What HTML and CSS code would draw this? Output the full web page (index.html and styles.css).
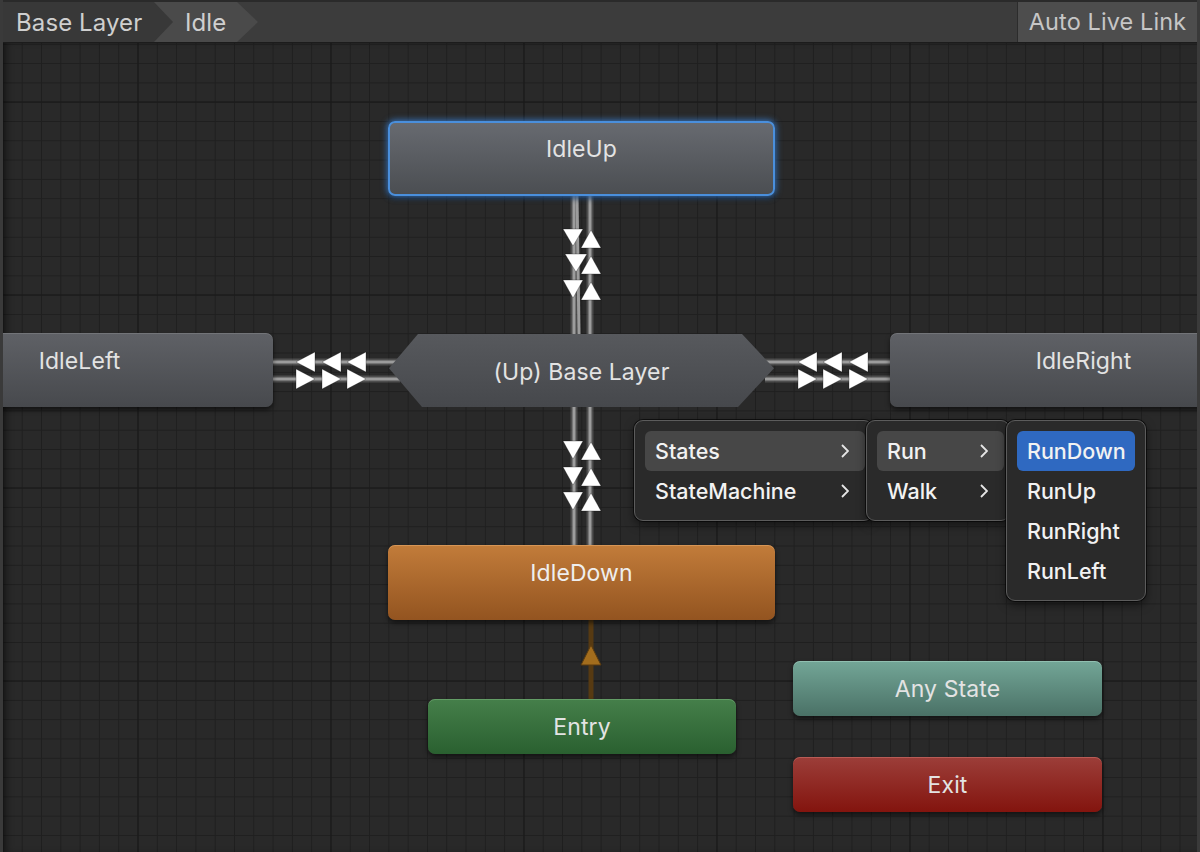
FILE: index.html
```html
<!DOCTYPE html>
<html lang="en">
<head>
<meta charset="utf-8">
<title>Animator - Base Layer</title>
<link rel="stylesheet" href="styles.css">
</head>
<body>
<div class="app">
  <header class="toolbar">
    <nav class="crumbs">
      <span class="crumb crumb-root">Base Layer</span>
      <span class="crumb crumb-current">Idle</span>
    </nav>
    <div class="toolbar-fill"></div>
    <button class="live-link">Auto Live Link</button>
  </header>

  <main class="graph">
    <svg class="edges" viewBox="0 43 1200 809" width="1200" height="809" aria-hidden="true">
      <g class="edge-glow">
        <line x1="574" y1="196" x2="574" y2="334"/>
        <line x1="590" y1="196" x2="590" y2="334"/>
        <line x1="574" y1="407" x2="574" y2="545"/>
        <line x1="590" y1="407" x2="590" y2="545"/>
        <line x1="270" y1="362" x2="400" y2="362"/>
        <line x1="270" y1="379" x2="400" y2="379"/>
        <line x1="765" y1="362" x2="892" y2="362"/>
        <line x1="765" y1="379" x2="892" y2="379"/>
      </g>
      <g class="edge-core">
        <line x1="574" y1="196" x2="574" y2="334"/>
        <line x1="577" y1="196" x2="579" y2="334"/>
        <line x1="590" y1="196" x2="590" y2="334"/>
        <line x1="574" y1="407" x2="574" y2="545"/>
        <line x1="590" y1="407" x2="590" y2="545"/>
        <line x1="270" y1="362" x2="400" y2="362"/>
        <line x1="270" y1="379" x2="400" y2="379"/>
        <line x1="765" y1="362" x2="892" y2="362"/>
        <line x1="765" y1="379" x2="892" y2="379"/>
      </g>
      <g class="arrows">
        <polygon points="563,229 583,229 573,246"/>
        <polygon points="565,254 587,254 576,272"/>
        <polygon points="563,280 583,280 573,298"/>
        <polygon points="581,248 601,248 591,230"/>
        <polygon points="581,274 601,274 591,256"/>
        <polygon points="581,300 601,300 591,282"/>
        <polygon points="563,441 583,441 573,459"/>
        <polygon points="563,467 583,467 573,485"/>
        <polygon points="563,492 583,492 573,510"/>
        <polygon points="581,460 601,460 591,442"/>
        <polygon points="581,486 601,486 591,468"/>
        <polygon points="581,511 601,511 591,493"/>
        <polygon points="296,362 315,352 315,372"/>
        <polygon points="322,362 341,352 341,372"/>
        <polygon points="347,362 366,352 366,372"/>
        <polygon points="315,379 296,369 296,389"/>
        <polygon points="341,379 322,369 322,389"/>
        <polygon points="366,379 347,369 347,389"/>
        <polygon points="798,362 817,352 817,372"/>
        <polygon points="823,362 842,352 842,372"/>
        <polygon points="849,362 868,352 868,372"/>
        <polygon points="817,379 798,369 798,389"/>
        <polygon points="842,379 823,369 823,389"/>
        <polygon points="868,379 849,369 849,389"/>
      </g>
      <line class="entry-edge" x1="591" y1="620" x2="591" y2="699"/>
      <polygon class="entry-arrow" points="581,665 601,665 591,645"/>
    </svg>

    <div class="node state n-idleup selected">IdleUp</div>
    <div class="node state n-idleleft">IdleLeft</div>
    <div class="node state n-idleright">IdleRight</div>
    <div class="node machine n-base">(Up) Base Layer</div>
    <div class="node state default n-idledown">IdleDown</div>
    <div class="node special entry n-entry">Entry</div>
    <div class="node special any n-any">Any State</div>
    <div class="node special exit n-exit">Exit</div>

    <div class="menus">
      <ul class="menu menu-1">
        <li class="item open"><span>States</span><svg class="chev" viewBox="0 0 8 14"><polyline points="1,1 7,7 1,13"/></svg></li>
        <li class="item"><span>StateMachine</span><svg class="chev" viewBox="0 0 8 14"><polyline points="1,1 7,7 1,13"/></svg></li>
      </ul>
      <ul class="menu menu-2">
        <li class="item open"><span>Run</span><svg class="chev" viewBox="0 0 8 14"><polyline points="1,1 7,7 1,13"/></svg></li>
        <li class="item"><span>Walk</span><svg class="chev" viewBox="0 0 8 14"><polyline points="1,1 7,7 1,13"/></svg></li>
      </ul>
      <ul class="menu menu-3">
        <li class="item active"><span>RunDown</span></li>
        <li class="item"><span>RunUp</span></li>
        <li class="item"><span>RunRight</span></li>
        <li class="item"><span>RunLeft</span></li>
      </ul>
    </div>
  </main>
</div>
</body>
</html>
```

FILE: styles.css
```css
* { box-sizing: border-box; }

html, body {
  margin: 0;
  padding: 0;
  width: 1200px;
  height: 852px;
  overflow: hidden;
  background: #282828;
}

.app {
  width: 1200px;
  height: 852px;
  display: flex;
  flex-direction: column;
  font-family: Inter, "Noto Sans", "Liberation Sans", sans-serif;
  border-left: 3px solid #3a3a3a;
  border-right: 3px solid #3a3a3a;
}

/* ---------- toolbar ---------- */
.toolbar {
  height: 43px;
  flex: 0 0 43px;
  display: flex;
  align-items: stretch;
  background: #3c3c3c;
  border-top: 2px solid #2a2a2a;
  border-bottom: 1px solid #1c1c1c;
}

.crumbs {
  display: flex;
  align-items: stretch;
}

.crumb {
  display: flex;
  align-items: center;
  font-size: 24px;
  color: #cfcfcf;
  letter-spacing: 0.1px;
}

.crumb-root {
  position: relative;
  z-index: 2;
  padding: 0 20px 0 13px;
  width: 170px;
  background: #383838;
  clip-path: polygon(0 0, 151px 0, 170px 50%, 151px 100%, 0 100%);
}

.crumb-current {
  margin-left: -19px;
  width: 104px;
  padding-left: 31px;
  background: #4a4a4a;
  clip-path: polygon(0 0, 83px 0, 104px 50%, 83px 100%, 0 100%);
}

.toolbar-fill { flex: 1; }

.live-link {
  margin: 0;
  border: 0;
  border-left: 1px solid #2c2c2c;
  width: 180px;
  background: #4d4d4d;
  color: #c6c6c6;
  font-family: inherit;
  font-size: 23.5px;
  padding: 0 0 2px;
  letter-spacing: 0.1px;
}

/* ---------- graph ---------- */
.graph {
  position: relative;
  flex: 1;
  overflow: hidden;
  background-color: #292929;
  background-image:
    linear-gradient(to right, #181818 0, #181818 1.5px, transparent 1.5px),
    linear-gradient(to bottom, #181818 0, #181818 1.5px, transparent 1.5px),
    linear-gradient(to right, #1f1f1f 0, #1f1f1f 1px, transparent 1px),
    linear-gradient(to bottom, #1f1f1f 0, #1f1f1f 1px, transparent 1px);
  background-size: 193px 193px, 193px 193px, 19.3px 19.3px, 19.3px 19.3px;
  background-position: 134.5px 0, 0 58.5px, 134.5px 0, 0 58.7px;
  box-shadow: inset 6px 0 8px -4px rgba(0,0,0,0.6);
}

.edges {
  position: absolute;
  left: -3px;
  top: 0;
}

.edge-glow line {
  stroke: rgba(150,150,150,0.35);
  stroke-width: 7;
}

.edge-core line {
  stroke: #9c9c9c;
  stroke-width: 3;
}

.arrows polygon {
  fill: #ffffff;
  stroke: rgba(0,0,0,0.35);
  stroke-width: 0.8;
}

.entry-edge {
  stroke: #573a12;
  stroke-width: 5;
}

.entry-arrow {
  fill: #a36d1d;
  stroke: #5a3b10;
  stroke-width: 1;
}

/* ---------- nodes ---------- */
.node {
  position: absolute;
  font-size: 23px;
  line-height: 24px;
  color: #e3e3e3;
  text-align: center;
  letter-spacing: 0.1px;
}

.state {
  width: 387px;
  height: 75px;
  padding-top: 16px;
  border-radius: 7px;
  background: linear-gradient(#5f6166, #47494d);
  box-shadow: inset 0 1px 0 rgba(255,255,255,0.12), 0 3px 5px rgba(0,0,0,0.55);
}

.state.selected {
  border: 2px solid #4a8fdc;
  padding-top: 14px;
  background: linear-gradient(#676a70, #4b4e52);
  box-shadow: 0 0 6px 1px rgba(60,130,214,0.85), 0 3px 5px rgba(0,0,0,0.5);
}

.state.default {
  background: linear-gradient(#c27c3a, #935420);
  color: #eeeeee;
  box-shadow: inset 0 1px 0 rgba(255,200,140,0.35), 0 3px 5px rgba(0,0,0,0.55);
}

.machine {
  width: 385px;
  height: 73px;
  padding-top: 26px;
  background: linear-gradient(#57595d, #46484c);
  clip-path: polygon(29px 0, calc(100% - 32px) 0, 100% 47%, calc(100% - 36px) 100%, 33px 100%, 0 47%);
}

.special {
  width: 309px;
  height: 55px;
  padding-top: 16px;
  border-radius: 7px;
}

.entry {
  width: 308px;
  background: linear-gradient(#457f4a, #2a6030);
  box-shadow: inset 0 1px 0 rgba(170,230,170,0.3), 0 3px 5px rgba(0,0,0,0.55);
}
.any {
  background: linear-gradient(#73a697, #4a7166);
  box-shadow: inset 0 1px 0 rgba(200,240,225,0.35), 0 3px 5px rgba(0,0,0,0.55);
}
.exit {
  background: linear-gradient(#9c3e39, #83140e);
  box-shadow: inset 0 1px 0 rgba(240,150,140,0.35), 0 3px 5px rgba(0,0,0,0.55);
}

.n-idleup    { left: 385px; top: 78px; }
.n-idleleft  { left: -117px; top: 290px; height: 74px; }
.n-idleright { left: 887px; top: 290px; height: 74px; }
.n-base      { left: 386px; top: 291px; }
.n-idledown  { left: 385px; top: 502px; }
.n-entry     { left: 425px; top: 656px; }
.n-any       { left: 790px; top: 618px; }
.n-exit      { left: 790px; top: 714px; }

/* ---------- context menus ---------- */
.menus {
  position: absolute;
  left: 631px;
  top: 377px;
  display: flex;
  align-items: flex-start;
}

.menu {
  list-style: none;
  margin: 0;
  padding: 10px 7px 9px 10px;
  background: #2a2a2a;
  border: 1px solid #5c5c5c;
  border-radius: 9px;
  box-shadow: 0 0 0 1px rgba(0,0,0,0.6), 0 4px 10px rgba(0,0,0,0.5);
  font-family: Inter, "Noto Sans", sans-serif;
  font-weight: 500;
  font-size: 21.5px;
  color: #f2f2f2;
}

.menu-1 { width: 239px; }
.menu-2 { width: 144px; margin-left: -7px; padding-right: 5px; }
.menu-3 { width: 140px; margin-left: -4px; padding-right: 10px; }

.item {
  height: 40px;
  display: flex;
  align-items: center;
  justify-content: space-between;
  padding: 0 16px 0 10px;
  border-radius: 6px;
}

.item.open { background: #474747; }
.item.active { background: #2f69c1; }

.chev {
  width: 8px;
  height: 14px;
  fill: none;
  stroke: #e6e6e6;
  stroke-width: 1.8;
}
```
